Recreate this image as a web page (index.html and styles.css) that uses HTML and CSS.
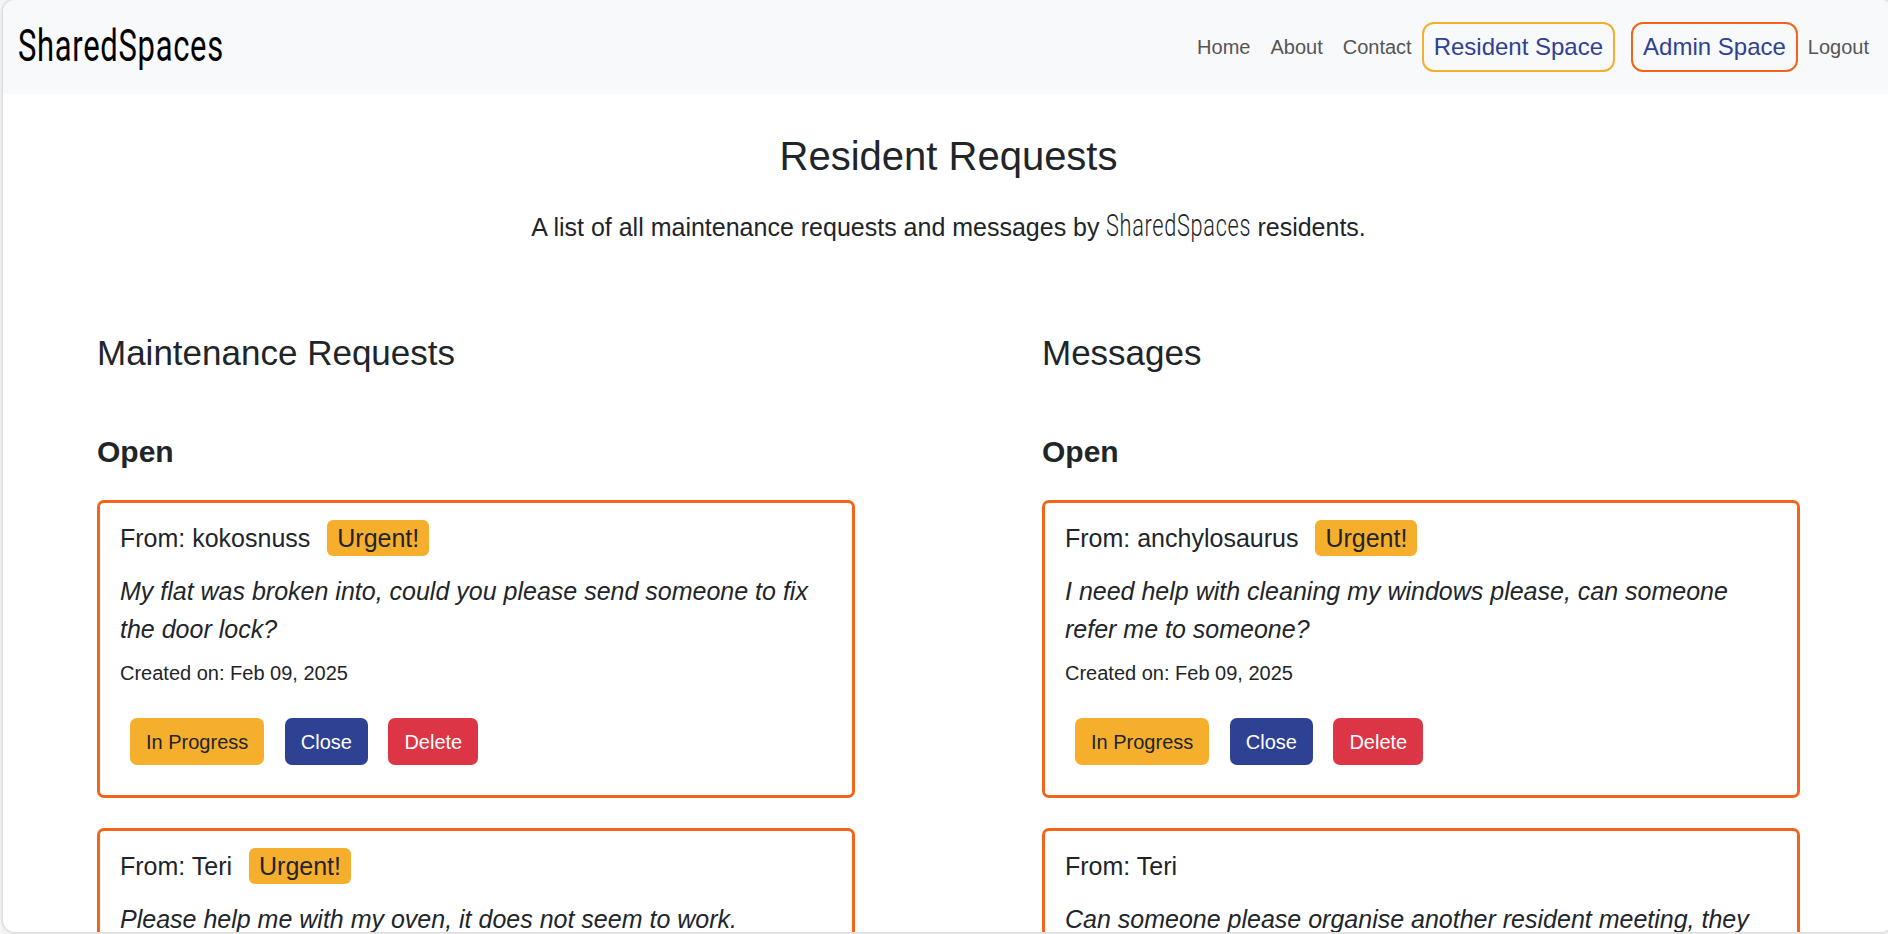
FILE: index.html
```html
<!DOCTYPE html>
<html lang="en">
<head>
<meta charset="utf-8">
<title>SharedSpaces</title>
<link rel="stylesheet" href="styles.css">
</head>
<body>
<div class="page">
  <nav class="navbar">
    <a class="brand"><span class="wordmark">SharedSpaces</span></a>
    <div class="links">
      <a class="link">Home</a>
      <a class="link">About</a>
      <a class="link">Contact</a>
      <a class="pill pill-resident">Resident Space</a>
      <a class="pill pill-admin">Admin Space</a>
      <a class="link">Logout</a>
    </div>
  </nav>
  <header class="intro">
    <h1 class="title">Resident Requests</h1>
    <p class="subtitle">A list of all maintenance requests and messages by <span class="brand-inline"><span class="wordmark">SharedSpaces</span></span> residents.</p>
  </header>
  <main class="columns">
    <section class="column">
      <h2 class="heading">Maintenance Requests</h2>
      <h3 class="status">Open</h3>
      <article class="card">
        <div class="from">From: kokosnuss <span class="badge">Urgent!</span></div>
        <p class="message">My flat was broken into, could you please send someone to fix the door lock?</p>
        <p class="created">Created on: Feb 09, 2025</p>
        <div class="actions">
          <button class="btn btn-progress">In Progress</button>
          <button class="btn btn-close">Close</button>
          <button class="btn btn-delete">Delete</button>
        </div>
      </article>
      <article class="card">
        <div class="from">From: Teri <span class="badge">Urgent!</span></div>
        <p class="message">Please help me with my oven, it does not seem to work.</p>
      </article>
    </section>
    <section class="column">
      <h2 class="heading">Messages</h2>
      <h3 class="status">Open</h3>
      <article class="card">
        <div class="from">From: anchylosaurus <span class="badge">Urgent!</span></div>
        <p class="message">I need help with cleaning my windows please, can someone refer me to someone?</p>
        <p class="created">Created on: Feb 09, 2025</p>
        <div class="actions">
          <button class="btn btn-progress">In Progress</button>
          <button class="btn btn-close">Close</button>
          <button class="btn btn-delete">Delete</button>
        </div>
      </article>
      <article class="card">
        <div class="from">From: Teri</div>
        <p class="message">Can someone please organise another resident meeting, they</p>
      </article>
    </section>
  </main>
</div>
</body>
</html>
```
FILE: styles.css
```css
* { box-sizing: border-box; }
html, body { height: 100%; }
body {
  margin: 0;
  overflow: hidden;
  background: #f5f5f5;
  color: #212529;
  font-family: "Liberation Sans", Arial, sans-serif;
  font-size: 25px;
  line-height: 37.5px;
}
h1, h2, h3, p { margin: 0; font-weight: 400; }
.page {
  width: 1890px;
  height: 932px;
  margin-left: 3px;
  overflow: hidden;
  background: #fff;
  border-radius: 12px;
  box-shadow: 0 0 3px 1px rgba(0, 0, 0, .15);
}
.navbar {
  display: flex;
  justify-content: space-between;
  align-items: center;
  height: 94px;
  padding: 0 14px 0 15px;
  background: #f8f9fb;
}
.wordmark {
  display: block;
  transform-origin: 0 50%;
  font-family: Roboto, sans-serif;
  white-space: nowrap;
}
.brand { width: 206px; height: 50px; color: #000; }
.brand .wordmark {
  font-size: 44px;
  font-weight: 400;
  line-height: 49px;
  letter-spacing: 1px;
  transform: scaleX(.703);
}
.links { display: flex; align-items: center; font-size: 20px; color: #555; }
.link { padding: 1px 10px 0; }
.pill {
  height: 50px;
  padding: 0 10px;
  border: 2px solid;
  border-radius: 12px;
  color: #2f4193;
  font-size: 24px;
  line-height: 46px;
  white-space: nowrap;
}
.pill-resident { border-color: #f6ae2d; margin-right: 16px; }
.pill-admin { border-color: #f26419; }
.intro { padding: 38px 0 0 1px; text-align: center; }
.title { font-size: 40px; line-height: 48px; }
.subtitle { margin-top: 29px; }
.brand-inline {
  display: inline-block;
  width: 144px;
  height: 37px;
  vertical-align: top;
  text-align: left;
}
.brand-inline .wordmark {
  font-size: 31px;
  font-weight: 300;
  line-height: 34px;
  letter-spacing: 1px;
  transform: scaleX(.7);
}
.columns { display: grid; grid-template-columns: 945px 945px; padding-top: 85px; }
.column { padding: 0 93px 0 94px; }
.heading { font-size: 35px; line-height: 42px; }
.status { margin-top: 60px; font-size: 30px; line-height: 36px; font-weight: 700; }
.card {
  height: 298px;
  margin: 30px 0;
  padding: 17px 20px;
  border: 3px solid #f26419;
  border-radius: 7px;
}
.from { height: 38px; }
.badge {
  display: inline-block;
  height: 36px;
  margin-left: 10px;
  padding: 0 10px;
  border-radius: 6px;
  background: #f6ae2d;
  line-height: 37px;
  vertical-align: top;
}
.message { margin-top: 14px; font-style: italic; line-height: 38px; }
.created { margin-top: 10px; font-size: 20px; line-height: 30px; }
.actions { display: flex; gap: 20.5px; margin: 30px 0 0 10px; }
.btn {
  height: 47px;
  padding: 1px 16px 0;
  border: 0;
  border-radius: 7px;
  color: #fff;
  font: 20px/46px "Liberation Sans", Arial, sans-serif;
}
.btn-progress { background: #f6ae2d; color: #212529; }
.btn-close { background: #2f4193; }
.btn-delete { background: #dc3545; }
```
